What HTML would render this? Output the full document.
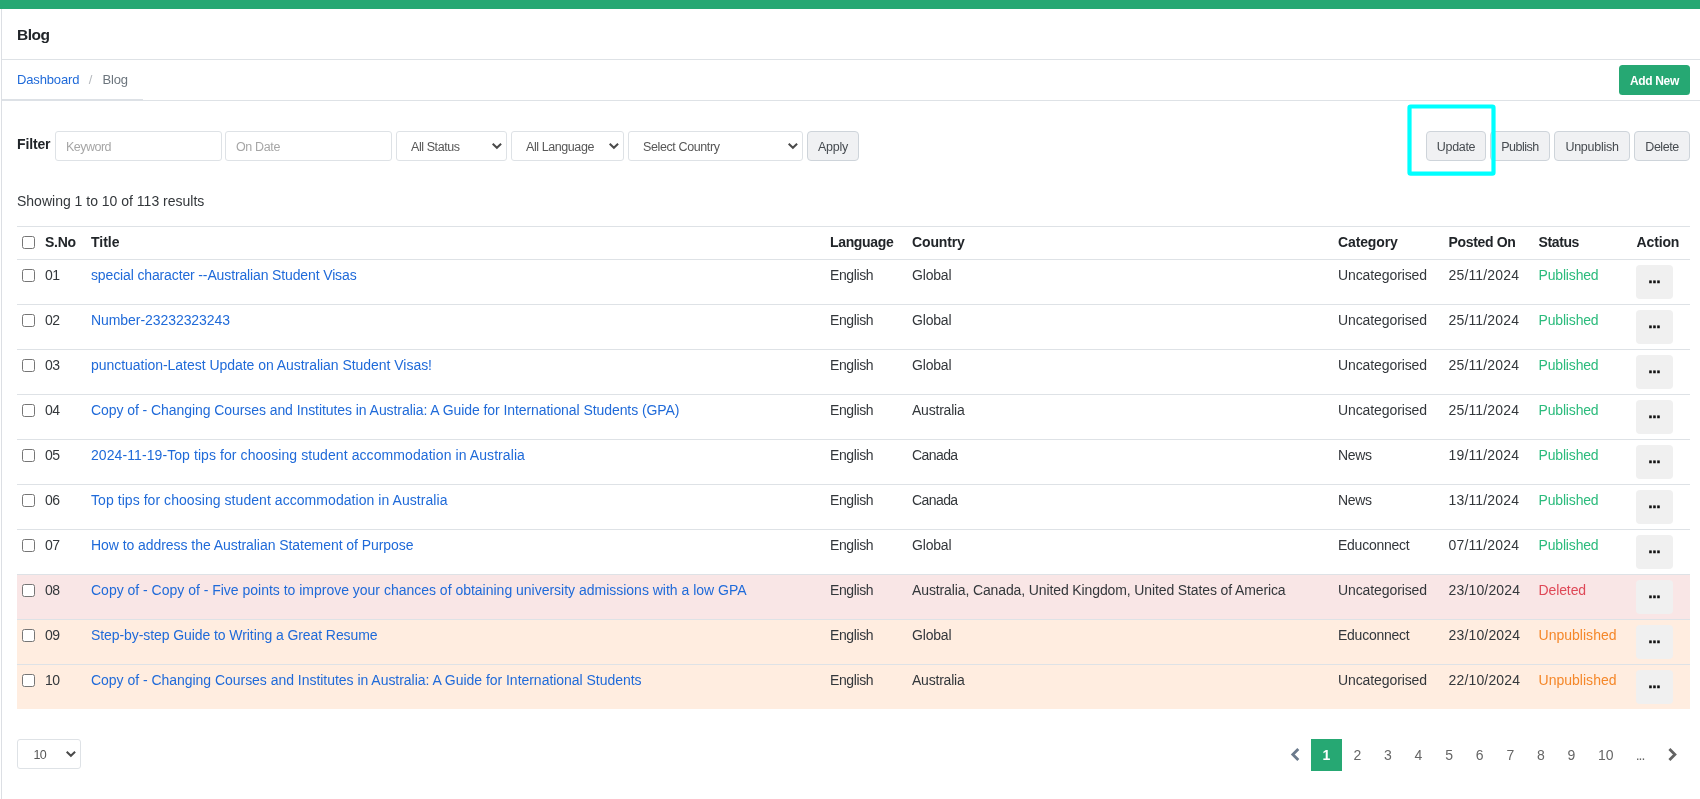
<!DOCTYPE html>
<html lang="en">
<head>
<meta charset="utf-8">
<title>Blog</title>
<style>
*{box-sizing:border-box;margin:0;padding:0}
html,body{width:1700px;height:799px;overflow:hidden;background:#fff}
body{font-family:"Liberation Sans",sans-serif;font-size:14px;color:#33373b;position:relative}
.abs{position:absolute}
.wrap{position:absolute;left:0;top:0;width:1700px;height:799px;will-change:transform}
.topbar{left:0;top:0;width:1700px;height:9px;background:#26a873}
.lborder{left:1px;top:9px;width:1px;height:790px;background:#dcdfe4}
.hline{left:2px;width:1698px;height:1px;background:#dee2e6}
h1{left:17px;top:25px;font-size:15.5px;font-weight:700;line-height:20px;color:#212529;white-space:nowrap;letter-spacing:-0.5px}
.crumb{left:17px;top:70px;font-size:13px;line-height:20px;white-space:nowrap}
.crumb a{color:#1f6ad9;text-decoration:none;letter-spacing:-0.15px}
.crumb .sep{color:#b5b9be;padding:0 10px 0 9.5px}
.crumb .cur{color:#6c757d;letter-spacing:-0.1px}
.btn{position:absolute;height:30px;border:1px solid #ced4da;border-radius:4px;background:#f0f1f3;color:#464b50;font-size:12.5px;line-height:28px;padding-top:1px;text-align:center;white-space:nowrap}
.addnew{left:1619px;top:65px;width:71px;height:30px;background:#26a873;border:0;border-radius:3.5px;color:#fff;font-weight:700;font-size:12px;line-height:32px;text-align:center;letter-spacing:-0.35px}
.flabel{color:#212529;left:17px;top:134px;font-weight:700;font-size:14px;line-height:20px;letter-spacing:-0.15px}
.inp{position:absolute;top:131px;height:30px;border:1px solid #dee2e6;border-radius:3px;background:#fff;font-size:12.5px;line-height:28px;padding-top:1px;color:#a6a6a6;padding-left:10px;white-space:nowrap}
.sel{position:absolute;height:30px;border:1px solid #dee2e6;border-radius:3px;background:#fff;font-size:12.5px;line-height:28px;padding-top:1px;color:#575757;padding-left:14px;white-space:nowrap}
.sel svg{position:absolute;right:2px;top:10px}
.showing{left:17px;top:191px;font-size:14px;line-height:20px;white-space:nowrap}
table{position:absolute;left:17px;top:226px;width:1673px;border-collapse:collapse;table-layout:fixed}
th,td{text-align:left;vertical-align:top;padding:0 5px;white-space:nowrap;overflow:visible;font-size:14px}
th{color:#212529;height:33px;border-top:1px solid #dee2e6;border-bottom:1px solid #dee2e6;font-weight:700;line-height:18px;padding-top:6px}
td{height:45px;border-bottom:1px solid #dee2e6;line-height:18px;padding-top:6px}
tbody tr:last-child td{border-bottom:0;height:44px}
th:nth-child(n+7),td:nth-child(7),td:nth-child(8){padding-left:5.5px}
td a{color:#1f6ad9;text-decoration:none}
.cb{display:block;width:13px;height:13px;border:1px solid #767676;border-radius:2.5px;background:#fff;margin-top:3px}
.pub{color:#2bbb7c}
.del{color:#df4857}
.unp{color:#f58729}
tr.rdel td{background:#f9e6e6}
tr.runp td{background:#ffede0}
.act{display:block;width:37px;height:34px;border-radius:4px;background:#f0f0f0;margin-top:-1px;color:#151515;font-weight:700;font-size:14px;line-height:26px;letter-spacing:0.11px;padding-left:12.5px;-webkit-text-stroke:0.6px #151515}

.pg{position:absolute;top:739px;height:32px;line-height:32px;font-size:14px;color:#666;text-align:center}
.pg.on{background:#26a873;color:#fff;font-weight:700}
</style>
</head>
<body>
<div class="wrap">
<div class="abs topbar"></div>
<div class="abs lborder"></div>
<h1 class="abs">Blog</h1>
<div class="abs hline" style="top:59px"></div>
<div class="abs crumb"><a>Dashboard</a><span class="sep">/</span><span class="cur">Blog</span></div>
<div class="abs addnew">Add New</div>
<div class="abs hline" style="top:100px"></div>
<div class="abs" style="left:2px;top:99px;width:141px;height:2px;background:#dde1e6"></div>

<div class="abs flabel">Filter</div>
<div class="inp" style="left:55px;width:167px;letter-spacing:-0.526px">Keyword</div>
<div class="inp" style="left:225px;width:167px;letter-spacing:-0.37px">On Date</div>
<div class="sel" style="left:396px;top:131px;width:111px;letter-spacing:-0.42px">All Status<svg width="14" height="9" viewBox="0 0 14 9"><path d="M2.7 1.7 L6.9 5.8 L11.1 1.7" fill="none" stroke="#4a4a4a" stroke-width="2"/></svg></div>
<div class="sel" style="left:511px;top:131px;width:113px;letter-spacing:-0.417px">All Language<svg width="14" height="9" viewBox="0 0 14 9"><path d="M2.7 1.7 L6.9 5.8 L11.1 1.7" fill="none" stroke="#4a4a4a" stroke-width="2"/></svg></div>
<div class="sel" style="left:628px;top:131px;width:175px;letter-spacing:-0.386px">Select Country<svg width="14" height="9" viewBox="0 0 14 9"><path d="M2.7 1.7 L6.9 5.8 L11.1 1.7" fill="none" stroke="#4a4a4a" stroke-width="2"/></svg></div>
<div class="btn" style="left:807px;top:131px;width:52px;letter-spacing:-0.22px">Apply</div>

<div class="btn" style="left:1426px;top:131px;width:60px;letter-spacing:-0.33px">Update</div>
<div class="btn" style="left:1490px;top:131px;width:60px;letter-spacing:-0.507px">Publish</div>
<div class="btn" style="left:1554px;top:131px;width:76px;letter-spacing:-0.27px">Unpublish</div>
<div class="btn" style="left:1634px;top:131px;width:56px;letter-spacing:-0.467px">Delete</div>
<svg class="abs" style="left:1400px;top:100px" width="100" height="80" viewBox="0 0 100 80"><rect x="9.5" y="6.5" width="84" height="67.1" rx="1.2" fill="none" stroke="#00ffff" stroke-width="4.2"/></svg>

<div class="abs showing">Showing 1 to 10 of 113 results</div>

<table>
<colgroup><col style="width:23px"><col style="width:46px"><col style="width:739px"><col style="width:82px"><col style="width:426px"><col style="width:110px"><col style="width:90px"><col style="width:98px"><col style="width:59px"></colgroup>
<thead><tr><th><span class="cb"></span></th><th style="letter-spacing:-0.27px">S.No</th><th>Title</th><th style="letter-spacing:-0.34px">Language</th><th style="letter-spacing:-0.13px">Country</th><th style="letter-spacing:-0.125px">Category</th><th style="letter-spacing:-0.33px">Posted On</th><th style="letter-spacing:-0.38px">Status</th><th style="letter-spacing:-0.13px">Action</th></tr></thead>
<tbody>
<tr><td><span class="cb"></span></td><td><span style="letter-spacing:-0.5px">01</span></td><td><a style="letter-spacing:-0.132px">special character --Australian Student Visas</a></td><td><span style="letter-spacing:-0.385px">English</span></td><td><span style="letter-spacing:-0.18px">Global</span></td><td><span style="letter-spacing:-0.1px">Uncategorised</span></td><td><span style="letter-spacing:0.16px">25/11/2024</span></td><td class="pub"><span style="letter-spacing:-0.167px">Published</span></td><td><span class="act">...</span></td></tr>
<tr><td><span class="cb"></span></td><td><span style="letter-spacing:-0.5px">02</span></td><td><a style="letter-spacing:-0.062px">Number-23232323243</a></td><td><span style="letter-spacing:-0.385px">English</span></td><td><span style="letter-spacing:-0.18px">Global</span></td><td><span style="letter-spacing:-0.1px">Uncategorised</span></td><td><span style="letter-spacing:0.16px">25/11/2024</span></td><td class="pub"><span style="letter-spacing:-0.167px">Published</span></td><td><span class="act">...</span></td></tr>
<tr><td><span class="cb"></span></td><td><span style="letter-spacing:-0.5px">03</span></td><td><a style="letter-spacing:-0.037px">punctuation-Latest Update on Australian Student Visas!</a></td><td><span style="letter-spacing:-0.385px">English</span></td><td><span style="letter-spacing:-0.18px">Global</span></td><td><span style="letter-spacing:-0.1px">Uncategorised</span></td><td><span style="letter-spacing:0.16px">25/11/2024</span></td><td class="pub"><span style="letter-spacing:-0.167px">Published</span></td><td><span class="act">...</span></td></tr>
<tr><td><span class="cb"></span></td><td><span style="letter-spacing:-0.5px">04</span></td><td><a style="letter-spacing:-0.069px">Copy of - Changing Courses and Institutes in Australia: A Guide for International Students (GPA)</a></td><td><span style="letter-spacing:-0.385px">English</span></td><td><span style="letter-spacing:-0.22px">Australia</span></td><td><span style="letter-spacing:-0.1px">Uncategorised</span></td><td><span style="letter-spacing:0.16px">25/11/2024</span></td><td class="pub"><span style="letter-spacing:-0.167px">Published</span></td><td><span class="act">...</span></td></tr>
<tr><td><span class="cb"></span></td><td><span style="letter-spacing:-0.5px">05</span></td><td><a style="letter-spacing:0.081px">2024-11-19-Top tips for choosing student accommodation in Australia</a></td><td><span style="letter-spacing:-0.385px">English</span></td><td><span style="letter-spacing:-0.58px">Canada</span></td><td><span style="letter-spacing:-0.375px">News</span></td><td><span style="letter-spacing:0.16px">19/11/2024</span></td><td class="pub"><span style="letter-spacing:-0.167px">Published</span></td><td><span class="act">...</span></td></tr>
<tr><td><span class="cb"></span></td><td><span style="letter-spacing:-0.5px">06</span></td><td><a style="letter-spacing:0.057px">Top tips for choosing student accommodation in Australia</a></td><td><span style="letter-spacing:-0.385px">English</span></td><td><span style="letter-spacing:-0.58px">Canada</span></td><td><span style="letter-spacing:-0.375px">News</span></td><td><span style="letter-spacing:0.16px">13/11/2024</span></td><td class="pub"><span style="letter-spacing:-0.167px">Published</span></td><td><span class="act">...</span></td></tr>
<tr><td><span class="cb"></span></td><td><span style="letter-spacing:-0.5px">07</span></td><td><a style="letter-spacing:-0.056px">How to address the Australian Statement of Purpose</a></td><td><span style="letter-spacing:-0.385px">English</span></td><td><span style="letter-spacing:-0.18px">Global</span></td><td><span style="letter-spacing:-0.25px">Educonnect</span></td><td><span style="letter-spacing:0.16px">07/11/2024</span></td><td class="pub"><span style="letter-spacing:-0.167px">Published</span></td><td><span class="act">...</span></td></tr>
<tr class="rdel"><td><span class="cb"></span></td><td><span style="letter-spacing:-0.5px">08</span></td><td><a style="letter-spacing:-0.009px">Copy of - Copy of - Five points to improve your chances of obtaining university admissions with a low GPA</a></td><td><span style="letter-spacing:-0.385px">English</span></td><td><span style="letter-spacing:-0.119px">Australia, Canada, United Kingdom, United States of America</span></td><td><span style="letter-spacing:-0.1px">Uncategorised</span></td><td><span style="letter-spacing:0.16px">23/10/2024</span></td><td class="del"><span style="letter-spacing:-0.11px">Deleted</span></td><td><span class="act">...</span></td></tr>
<tr class="runp"><td><span class="cb"></span></td><td><span style="letter-spacing:-0.5px">09</span></td><td><a style="letter-spacing:-0.079px">Step-by-step Guide to Writing a Great Resume</a></td><td><span style="letter-spacing:-0.385px">English</span></td><td><span style="letter-spacing:-0.18px">Global</span></td><td><span style="letter-spacing:-0.25px">Educonnect</span></td><td><span style="letter-spacing:0.16px">23/10/2024</span></td><td class="unp"><span style="letter-spacing:0.02px">Unpublished</span></td><td><span class="act">...</span></td></tr>
<tr class="runp"><td><span class="cb"></span></td><td><span style="letter-spacing:-0.5px">10</span></td><td><a style="letter-spacing:-0.031px">Copy of - Changing Courses and Institutes in Australia: A Guide for International Students</a></td><td><span style="letter-spacing:-0.385px">English</span></td><td><span style="letter-spacing:-0.22px">Australia</span></td><td><span style="letter-spacing:-0.1px">Uncategorised</span></td><td><span style="letter-spacing:0.16px">22/10/2024</span></td><td class="unp"><span style="letter-spacing:0.02px">Unpublished</span></td><td><span class="act">...</span></td></tr>
</tbody>
</table>

<div class="sel" style="left:17px;top:739px;width:64px;padding-left:15.5px;letter-spacing:-0.6px">10<svg width="14" height="9" viewBox="0 0 14 9"><path d="M2.7 1.7 L6.9 5.8 L11.1 1.7" fill="none" stroke="#4a4a4a" stroke-width="2"/></svg></div>

<svg class="abs" style="left:1290px;top:748px" width="11" height="14" viewBox="0 0 11 14"><path d="M8.3 1 L2.8 6.5 L8.3 12" fill="none" stroke="#6b7a8c" stroke-width="2.8"/></svg>
<div class="pg on" style="left:1311px;width:31px">1</div>
<div class="pg" style="left:1342.0px;width:30.6px">2</div>
<div class="pg" style="left:1372.6px;width:30.6px">3</div>
<div class="pg" style="left:1403.2px;width:30.6px">4</div>
<div class="pg" style="left:1433.8px;width:30.6px">5</div>
<div class="pg" style="left:1464.4px;width:30.6px">6</div>
<div class="pg" style="left:1495.0px;width:30.6px">7</div>
<div class="pg" style="left:1525.6px;width:30.6px">8</div>
<div class="pg" style="left:1556.2px;width:30.6px">9</div>
<div class="pg" style="left:1586.8px;width:38px">10</div>
<div class="pg" style="left:1624.5px;width:31px;letter-spacing:-1px">...</div>
<svg class="abs" style="left:1667px;top:748px" width="11" height="14" viewBox="0 0 11 14"><path d="M2.4 1 L7.9 6.5 L2.4 12" fill="none" stroke="#636363" stroke-width="2.8"/></svg>
</div>
</body>
</html>
